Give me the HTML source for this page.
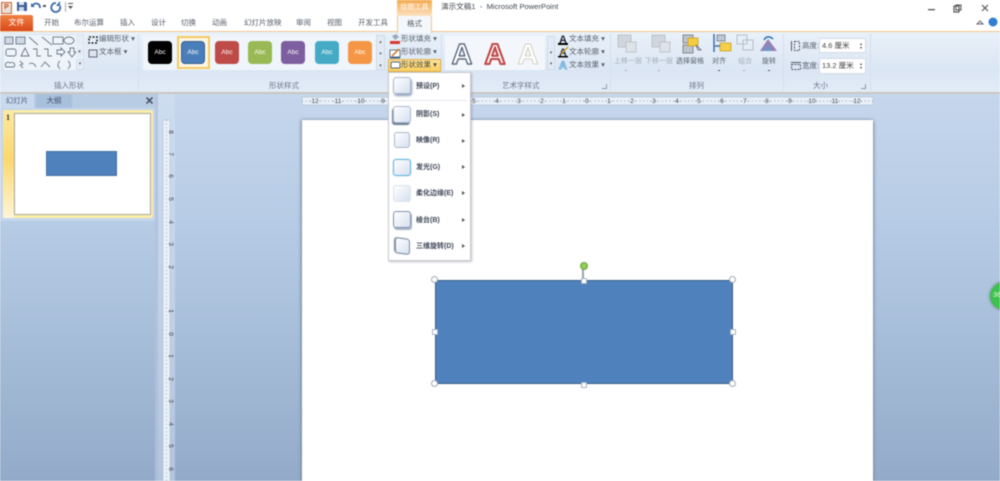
<!DOCTYPE html>
<html><head><meta charset="utf-8"><style>
html,body{margin:0;padding:0;width:1000px;height:481px;overflow:hidden;background:#fff}
#w{position:relative;width:1000px;height:481px;overflow:hidden;filter:blur(.45px);font-family:"Liberation Sans","Noto Sans CJK SC",sans-serif;color:#4c5a6e;font-size:7.5px;line-height:10px}
#w div,#w span{position:absolute;white-space:nowrap}
.t{font-size:7.5px;color:#58606c}
.sw{top:41px;width:24px;height:23px;border-radius:4px;color:#fff;font-size:6.5px;line-height:23px;text-align:center}
.m{left:416px;color:#3d4656;font-weight:bold;font-size:7px}
.a{left:462px;width:0;height:0;border-left:3px solid #555;border-top:2px solid transparent;border-bottom:2px solid transparent}
.ic{left:393px;width:16px;height:15px;border-radius:3px;background:linear-gradient(135deg,#fff,#d5e0ef);border:1px solid #a9b8cc}
.h{width:5px;height:5px;border-radius:50%;background:#fff;border:1px solid #a3a9b2}
.q{width:4px;height:4px;border-radius:1px;background:#fff;border:1px solid #a3b2c4}
.sep{top:34px;width:1px;height:56px;background:#d4dfee}
.g{top:81px;font-size:7.5px;color:#69758a}
</style></head><body><div id="w">

<!-- title bar -->
<div style="left:0;top:0;width:1000px;height:31px;background:#fff"></div>
<div style="left:1px;top:2px;width:9px;height:10px;background:#e8e0d8;border:1px solid #d2622a;color:#c9501c;font-size:7px;line-height:10px;text-align:center;font-weight:bold">P</div>
<svg style="position:absolute;left:15px;top:0" width="60" height="14"><path d="M2 2h9l1 1v8H2z" fill="#3f5f98"/><rect x="4" y="2" width="5" height="3" fill="#dfe6f0"/><rect x="4" y="7" width="5" height="4" fill="#c9d5e8"/><path d="M17 6c3-4 8-3 8 2" fill="none" stroke="#3c6aa8" stroke-width="1.8"/><path d="M16 3v4h4z" fill="#3c6aa8"/><rect x="28" y="5" width="3" height="2" fill="#555"/><path d="M41 3a4.500 4.500 0 1 0 4 3" fill="none" stroke="#3c6aa8" stroke-width="1.8"/><path d="M45 1v5h-4z" fill="#3c6aa8"/><rect x="50" y="2" width="1" height="10" fill="#aaa"/><path d="M53 6h5l-2.500 3z M53 3h5v1h-5z" fill="#555"/></svg>
<div style="left:441px;top:2px;font-size:7.6px;color:#3f4650">演示文稿1 &nbsp;-&nbsp; Microsoft PowerPoint</div>
<svg style="position:absolute;left:925px;top:2px" width="75" height="26"><rect x="3" y="7" width="7" height="1.300" fill="#555"/><rect x="29" y="4" width="5" height="6" fill="none" stroke="#555" stroke-width="1.200"/><rect x="31" y="3" width="5" height="5" fill="none" stroke="#555"/><path d="M57 3l6 6M63 3l-6 6" stroke="#555" stroke-width="1.200"/><path d="M52 22l3-3 3 3z" fill="none" stroke="#667"/><circle cx="68" cy="20" r="4.500" fill="#2f7fd0"/></svg>

<!-- tabs -->
<div style="left:0;top:15px;width:33px;height:16px;background:linear-gradient(#f08040,#d9481a);border-radius:2px 2px 0 0;color:#fff;font-size:8px;line-height:16px;text-align:center">文件</div>
<div class="t" style="left:44px;top:18px">开始</div>
<div class="t" style="left:74px;top:18px">布尔运算</div>
<div class="t" style="left:120px;top:18px">插入</div>
<div class="t" style="left:151px;top:18px">设计</div>
<div class="t" style="left:181px;top:18px">切换</div>
<div class="t" style="left:212px;top:18px">动画</div>
<div class="t" style="left:244px;top:18px">幻灯片放映</div>
<div class="t" style="left:296px;top:18px">审阅</div>
<div class="t" style="left:327px;top:18px">视图</div>
<div class="t" style="left:358px;top:18px">开发工具</div>
<div style="left:397px;top:0;width:35px;height:16px;background:linear-gradient(#f5a94e,#fbe2c2);color:#fff;font-size:7px;line-height:16px;text-align:center">绘图工具</div>
<div style="left:0;top:31px;width:1000px;height:1px;background:#f3c48c"></div>
<div style="left:397px;top:16px;width:35px;height:17px;background:#f4f8fc;border-left:1px solid #f3c48c;border-right:1px solid #f3c48c;box-sizing:border-box;color:#4d5868;font-size:7.5px;line-height:16px;text-align:center;z-index:2">格式</div>

<!-- ribbon -->
<div style="left:0;top:32px;width:1000px;height:60px;background:linear-gradient(#e9f1f9,#dbe6f4 65%,#e3ecf7)"></div>
<div style="left:0;top:92px;width:1000px;height:2px;background:#c9c7c0"></div>
<div class="sep" style="left:138px"></div><div class="sep" style="left:610px"></div><div class="sep" style="left:783px"></div><div class="sep" style="left:870px"></div><div class="sep" style="left:441px;height:56px"></div>

<!-- shapes gallery -->
<div style="left:3px;top:34px;width:81px;height:37px;background:#eef4fa;border:1px solid #dce6f2;box-sizing:border-box"></div>
<svg style="position:absolute;left:4px;top:35px" width="82" height="36" fill="none" stroke="#6c7787" stroke-width=".9"><rect x="1" y="2" width="8" height="7" fill="#cfd8e3"/><rect x="12" y="2" width="9" height="7" fill="#cfd8e3"/><path d="M25 2l9 8M38 2l10 8"/><rect x="49" y="2" width="10" height="7"/><ellipse cx="65" cy="5.500" rx="5" ry="3.500"/><rect x="2" y="14" width="10" height="7" rx="2"/><path d="M17 21l4-8 4 8zM29 14h4v7h4M40 14h4v7h4M53 15h4v-2l4 4-4 4v-2h-4zM66 13h4v4h2l-4 5-4-5h2z"/><path d="M2 32c-2-4 2-6 4-4 3-2 6 1 4 4zM16 26l3 3-3 1 3 3M25 29c3-2 6 0 7 3M37 32l4-5 5 5M56 26c-3 2-1 3-2 4s1 2 2 4M64 26c3 2 1 3 2 4s-1 2-2 4"/></svg>
<div style="left:76px;top:35px;width:7px;height:11px;background:#e4ecf6"></div><div style="left:76px;top:47px;width:7px;height:11px;background:#e4ecf6;color:#555;font-size:5px;line-height:10px;text-align:center">▾</div><div style="left:76px;top:59px;width:8px;height:11px;background:#e4ecf6;border:1px solid #d3deec;box-sizing:border-box;color:#666;font-size:5px;line-height:9px;text-align:center">▾</div>
<svg style="position:absolute;left:87px;top:35px" width="12" height="24"><rect x="2" y="2" width="8" height="6" fill="none" stroke="#222" stroke-dasharray="2 1.500" stroke-width="1.500"/><rect x="2" y="15" width="8" height="7" fill="#dfe6ee" stroke="#667"/></svg>
<div class="t" style="left:99px;top:34px">编辑形状 ▾</div><div class="t" style="left:99px;top:47px">文本框 ▾</div>
<div class="g" style="left:54px;top:81px">插入形状</div>

<!-- style gallery -->
<div style="left:143px;top:35px;width:240px;height:35px;background:#eff5fb"></div>
<div style="left:177px;top:36px;width:33px;height:33px;box-sizing:border-box;border:2px solid #f5c862;background:#fdf6e3"></div>
<div class="sw" style="left:148px;background:#000">Abc</div>
<div class="sw" style="left:181px;background:#4a7ebb;border:1px solid #35608f;box-sizing:border-box;line-height:21px">Abc</div>
<div class="sw" style="left:215px;background:#be4b48">Abc</div>
<div class="sw" style="left:248px;background:#98b954">Abc</div>
<div class="sw" style="left:281px;background:#7d5fa0">Abc</div>
<div class="sw" style="left:315px;background:#46aac5">Abc</div>
<div class="sw" style="left:348px;background:#f59645">Abc</div>
<div style="left:376px;top:35px;width:9px;height:35px;background:#e2ebf5;border:1px solid #d0dbe9;box-sizing:border-box;color:#666;font-size:5px;line-height:12px;text-align:center;white-space:normal">▴<br>▾<br>▾</div>
<div class="g" style="left:269px;top:81px">形状样式</div>

<!-- shape fill etc -->
<div style="left:388px;top:59px;width:53px;height:13px;background:linear-gradient(#fde59a,#fbcf5f);border:1px solid #e3b04a;box-sizing:border-box"></div>
<svg style="position:absolute;left:389px;top:33px" width="13" height="38"><path d="M3 3l4-2 3 3-4 3z" fill="#9ab" /><rect x="1" y="8" width="10" height="3" fill="#d8382f"/><rect x="1" y="17" width="10" height="7" fill="#fff" stroke="#678"/><path d="M3 23l7-7" stroke="#d07020" stroke-width="1.500"/><rect x="1" y="24" width="10" height="1.500" fill="#385d8a"/><rect x="2" y="29" width="9" height="6" rx="1" fill="#fff" stroke="#567"/></svg>
<div class="t" style="left:401px;top:34px">形状填充 ▾</div>
<div class="t" style="left:401px;top:47px">形状轮廓 ▾</div>
<div class="t" style="left:401px;top:60px;color:#4b4a3a">形状效果 ▾</div>

<!-- wordart -->
<div style="left:445px;top:36px;width:100px;height:34px;background:#f3f7fb"></div>
<svg style="position:absolute;left:445px;top:36px" width="100" height="34" fill="none" stroke-linejoin="round"><g font-family="Liberation Sans" font-size="29" font-weight="bold" text-anchor="middle"><text x="17" y="28" stroke="#5d6d80" stroke-width="1.400" fill="#fff">A</text><text x="50" y="28" stroke="#c0494a" stroke-width="2.100" fill="#fff">A</text><text x="83" y="28" stroke="#d4cfc5" stroke-width="1" fill="#fff">A</text></g></svg>
<div style="left:547px;top:36px;width:8px;height:34px;background:#e2ebf5;border:1px solid #d0dbe9;box-sizing:border-box;color:#666;font-size:5px;line-height:11px;text-align:center;white-space:normal"><br>▾<br>▾</div>
<svg style="position:absolute;left:557px;top:33px" width="13" height="38"><text x="2" y="10" font-family="Liberation Sans" font-size="11" font-weight="bold" fill="#223">A</text><rect x="1" y="10" width="10" height="2" fill="#000"/><text x="2" y="23" font-family="Liberation Sans" font-size="11" font-weight="bold" fill="#334">A</text><path d="M4 21l7-7" stroke="#c8a020" stroke-width="1.500"/><rect x="1" y="23" width="10" height="1.500" fill="#000"/><text x="2" y="36" font-family="Liberation Sans" font-size="11" font-weight="bold" fill="none" stroke="#58a6d8" stroke-width=".8">A</text></svg>
<div class="t" style="left:569px;top:34px">文本填充 ▾</div>
<div class="t" style="left:569px;top:47px">文本轮廓 ▾</div>
<div class="t" style="left:569px;top:60px">文本效果 ▾</div>
<div class="g" style="left:502px;top:81px">艺术字样式</div>
<div style="left:602px;top:84px;width:4px;height:4px;border-right:1px solid #8899aa;border-bottom:1px solid #8899aa"></div>

<!-- arrange -->
<svg style="position:absolute;left:612px;top:32px" width="170" height="28" fill="#d1d6dc" stroke="#b5bcc5" stroke-width=".8"><rect x="6" y="3" width="13" height="12"/><rect x="14" y="10" width="10" height="10" fill="#dfe3e8"/><rect x="40" y="3" width="13" height="12"/><rect x="48" y="10" width="10" height="10" fill="#dfe3e8"/><rect x="71" y="3" width="10" height="8" fill="#bcc4cd" stroke="#777"/><rect x="71" y="13" width="10" height="8" fill="#bcc4cd" stroke="#777"/><rect x="76" y="6" width="10" height="8" fill="#f3cd3b" stroke="#c9a030"/><path d="M84 13l5 5-3 0z" fill="#dde" stroke="#667"/><path d="M102 2v18" stroke="#3c6ea8" stroke-width="1.500"/><rect x="105" y="3" width="8" height="6" fill="#bcc8d6" stroke="#778"/><rect x="108" y="11" width="11" height="8" fill="#f5cf45" stroke="#c9a030"/><path d="M103 14h5" stroke="#3c6ea8" stroke-width="1.500"/><g fill="none" stroke="#aab2bb"><rect x="125" y="3" width="10" height="9"/><rect x="131" y="8" width="10" height="10"/></g><path d="M148 19l8-12 9 12z" fill="#9a7fb5" stroke="none"/><path d="M150 19l6-7 4 7z" fill="#6f93c6" stroke="none"/><path d="M152 8c2-4 6-4 9-1" fill="none" stroke="#2d6fae" stroke-width="1.500"/></svg>
<div class="t" style="left:614px;top:57px;color:#a4adb8;font-size:7px">上移一层</div>
<div class="t" style="left:645px;top:57px;color:#a4adb8;font-size:7px">下移一层</div>
<div class="t" style="left:676px;top:57px;font-size:7px">选择窗格</div>
<div class="t" style="left:712px;top:57px;font-size:7px">对齐</div>
<div class="t" style="left:738px;top:57px;color:#a4adb8;font-size:7px">组合</div>
<div class="t" style="left:762px;top:57px;font-size:7px">旋转</div>
<div style="left:625px;top:70px;width:2px;height:1px;background:#aab"></div><div style="left:658px;top:70px;width:2px;height:1px;background:#aab"></div><div style="left:718px;top:70px;width:2px;height:1px;background:#556"></div><div style="left:743px;top:70px;width:2px;height:1px;background:#aab"></div><div style="left:768px;top:70px;width:2px;height:1px;background:#556"></div>
<div class="g" style="left:689px;top:81px">排列</div>

<!-- size -->
<svg style="position:absolute;left:789px;top:38px" width="14" height="36" fill="none" stroke="#556"><rect x="5.500" y="3.500" width="5" height="9" stroke-dasharray="2 1"/><path d="M2.500 3v10"/><rect x="2.500" y="26.500" width="9" height="5" stroke-dasharray="2 1"/><path d="M2 24.500h10"/></svg>
<div class="t" style="left:802px;top:41px">高度:</div><div class="t" style="left:802px;top:61px">宽度:</div>
<div style="left:819px;top:38px;width:47px;height:15px;background:#fff;border:1px solid #d2dbe6;box-sizing:border-box;font-size:7.500px;line-height:13px;color:#444;padding-left:2px">4.6 厘米</div>
<div style="left:819px;top:58px;width:47px;height:16px;background:#fff;border:1px solid #d2dbe6;box-sizing:border-box;font-size:7.500px;line-height:14px;color:#444;padding-left:2px">13.2 厘米</div>
<div style="left:860px;top:42px;font-size:4px;line-height:4px;color:#333;white-space:normal">▴<br>▾</div><div style="left:860px;top:62px;font-size:4px;line-height:4px;color:#333;white-space:normal">▴<br>▾</div>
<div class="g" style="left:813px;top:81px">大小</div>
<div style="left:861px;top:84px;width:4px;height:4px;border-right:1px solid #8899aa;border-bottom:1px solid #8899aa"></div>

<!-- workspace -->
<div style="left:0;top:94px;width:1000px;height:387px;background:linear-gradient(#c6d7ed,#b3c9e3 40%,#93abc9)"></div>
<div style="left:155px;top:94px;width:3px;height:387px;background:#b0c3dc;opacity:.8"></div>
<div style="left:158px;top:94px;width:17px;height:387px;background:rgba(215,228,244,.45)"></div>

<!-- left panel -->
<div style="left:0;top:94px;width:155px;height:14px;background:#b8cce4"></div>
<div style="left:0;top:94px;width:34px;height:14px;background:#c9daef;color:#4f6179;font-size:7.500px;line-height:14px;text-align:center">幻灯片</div>
<div style="left:36px;top:94px;width:36px;height:14px;background:#a9c0dc;color:#3f5068;font-size:7.500px;line-height:14px;text-align:center">大纲</div>
<svg style="position:absolute;left:145px;top:96px" width="9" height="9"><path d="M1.500 1.500l6 6M7.500 1.500l-6 6" stroke="#3f4c5c" stroke-width="1.500"/></svg>
<div style="left:0;top:108px;width:155px;height:113px;background:#c4d6ec"></div>
<div style="left:3px;top:110px;width:150px;height:108px;background:#fbeea9;border-radius:2px"></div>
<div style="left:3px;top:110px;width:11px;height:108px;background:linear-gradient(#fce9a1,#fbd86f 45%,#fff6d8)"></div>
<div style="left:6px;top:113px;font-size:8px;font-weight:bold;color:#333;font-family:'Liberation Serif',serif">1</div>
<div style="left:14px;top:113px;width:137px;height:102px;background:#fff;border:1px solid #a8a598;box-sizing:border-box"></div>
<div style="left:46px;top:151px;width:71px;height:25px;background:#4f81bd;border:.5px solid #4672a5;box-sizing:border-box"></div>

<!-- rulers -->
<svg style="position:absolute;left:0;top:0" width="1000" height="481" font-family="Liberation Sans" font-size="6.500" fill="#3b4450" text-anchor="middle">
<rect x="302" y="97" width="571" height="8" fill="#e9f0f9" stroke="#a9b7c9" stroke-width=".5"/>
<rect x="163" y="120" width="7" height="361" fill="#e9f0f9" stroke="#a9b7c9" stroke-width=".5"/>
<g><text x="315" y="103">·12·</text><text x="338" y="103">·11·</text><text x="361" y="103">·10·</text><text x="383" y="103">·9·</text><text x="474" y="103">·5·</text><text x="497" y="103">·4·</text><text x="519" y="103">·3·</text><text x="542" y="103">·2·</text><text x="564" y="103">·1·</text><text x="587" y="103">·0·</text><text x="609" y="103">·1·</text><text x="632" y="103">·2·</text><text x="654" y="103">·3·</text><text x="677" y="103">·4·</text><text x="699" y="103">·5·</text><text x="722" y="103">·6·</text><text x="745" y="103">·7·</text><text x="767" y="103">·8·</text><text x="790" y="103">·9·</text><text x="812" y="103">·10·</text><text x="835" y="103">·11·</text><text x="857" y="103">·12·</text></g>
<g stroke="#69727d" stroke-width=".7" stroke-dasharray=".8 2.950" fill="none"><path d="M302 101H873"/><path d="M166.500 120V481"/></g>
<g font-size="6.500"><text transform="translate(169,132) rotate(90)">8</text><text transform="translate(169,154) rotate(90)">7</text><text transform="translate(169,176) rotate(90)">6</text><text transform="translate(169,199) rotate(90)">5</text><text transform="translate(169,222) rotate(90)">4</text><text transform="translate(169,244) rotate(90)">3</text><text transform="translate(169,267) rotate(90)">2</text><text transform="translate(169,311) rotate(90)">1</text><text transform="translate(169,334) rotate(90)">0</text><text transform="translate(169,356) rotate(90)">1</text><text transform="translate(169,379) rotate(90)">2</text><text transform="translate(169,401) rotate(90)">3</text><text transform="translate(169,424) rotate(90)">4</text><text transform="translate(169,446) rotate(90)">5</text><text transform="translate(169,469) rotate(90)">6</text></g>
</svg>

<!-- slide -->
<div style="left:302px;top:120px;width:571px;height:361px;background:#fff;box-shadow:-1px 0 3px #77889e,1px 1px 3px #8295ad"></div>
<div style="left:435px;top:280px;width:298px;height:104px;background:#4f81bd;border:1.500px solid #385d8a;box-sizing:border-box"></div>
<div style="left:582px;top:268px;width:1.500px;height:12px;background:#9aa3ad"></div>
<div style="left:580px;top:262px;width:6px;height:6px;border-radius:50%;background:#8fce55;border:.5px solid #6da23c"></div>
<div class="h" style="left:431px;top:276px"></div><div class="h" style="left:729px;top:276px"></div><div class="h" style="left:431px;top:380px"></div><div class="h" style="left:729px;top:380px"></div>
<div class="q" style="left:581px;top:278px"></div><div class="q" style="left:581px;top:382px"></div><div class="q" style="left:432px;top:329px"></div><div class="q" style="left:730px;top:329px"></div>

<!-- dropdown menu -->
<div style="left:388px;top:72px;width:83px;height:189px;background:#fff;border:1px solid #c6c9ce;box-sizing:border-box;box-shadow:1px 1px 2px rgba(80,90,110,.35)"></div>
<div style="left:392px;top:100px;width:75px;height:1px;background:#e6e9ee"></div>
<div class="ic" style="top:77px;height:15px;box-shadow:1px 2px 2px #8fa0b5"></div><div class="m" style="top:82px">预设(P)</div><div class="a" style="top:84px"></div>
<div class="ic" style="top:106px;box-shadow:-1px 2px 1px #6b7a8e"></div><div class="m" style="top:110px">阴影(S)</div><div class="a" style="top:113px"></div>
<div class="ic" style="left:394px;top:132px;width:14px;height:14px"></div><div class="m" style="top:136px">映像(R)</div><div class="a" style="top:139px"></div>
<div class="ic" style="top:159px;border:1px solid #62b4dc;box-shadow:0 0 1px #7cc3e6"></div><div class="m" style="top:163px">发光(G)</div><div class="a" style="top:165px"></div>
<div class="ic" style="top:185px;border-color:#dbe3ee"></div><div class="m" style="top:189px">柔化边缘(E)</div><div class="a" style="top:191px"></div>
<div class="ic" style="top:211px;border-color:#8292a8;box-shadow:1px 2px 1px #a5b2c4"></div><div class="m" style="top:216px">棱台(B)</div><div class="a" style="top:218px"></div>
<div class="ic" style="left:395px;top:238px;width:13px;height:14px;transform:skewY(8deg);border-color:#7d8ca2;box-shadow:-1px 0 1px #7d8ca2"></div><div class="m" style="top:242px">三维旋转(D)</div><div class="a" style="top:244px"></div>

<!-- green float -->
<div style="left:990px;top:282px;width:28px;height:28px;border-radius:50%;background:#3fc04f;box-shadow:0 0 3px #5c7a70;color:#e5f7e0;font-size:7px;line-height:28px;padding-left:3px;box-sizing:border-box">36</div>
</div></body></html>
